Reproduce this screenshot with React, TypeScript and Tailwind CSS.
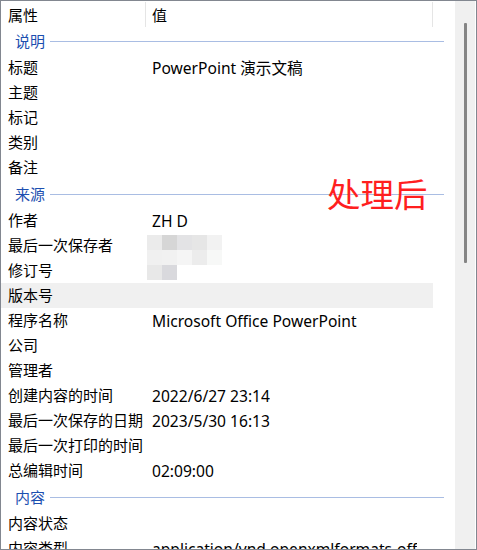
import React from "react";

type Row =
  | { kind: "section"; label: string }
  | { kind: "row"; label: string; value?: string; highlight?: boolean; blur?: boolean };

const rows: Row[] = [
  { kind: "section", label: "说明" },
  { kind: "row", label: "标题", value: "PowerPoint 演示文稿" },
  { kind: "row", label: "主题" },
  { kind: "row", label: "标记" },
  { kind: "row", label: "类别" },
  { kind: "row", label: "备注" },
  { kind: "section", label: "来源" },
  { kind: "row", label: "作者", value: "ZH D" },
  { kind: "row", label: "最后一次保存者", blur: true },
  { kind: "row", label: "修订号" },
  { kind: "row", label: "版本号", highlight: true },
  { kind: "row", label: "程序名称", value: "Microsoft Office PowerPoint" },
  { kind: "row", label: "公司" },
  { kind: "row", label: "管理者" },
  { kind: "row", label: "创建内容的时间", value: "2022/6/27 23:14" },
  { kind: "row", label: "最后一次保存的日期", value: "2023/5/30 16:13" },
  { kind: "row", label: "最后一次打印的时间" },
  { kind: "row", label: "总编辑时间", value: "02:09:00" },
  { kind: "section", label: "内容" },
  { kind: "row", label: "内容状态" },
  { kind: "row", label: "内容类型", value: "application/vnd.openxmlformats-off" },
];

// mosaic used to hide the saved-by name
const mosaic = [
  ["#ebebeb", "#d6d6d6", "#e3e3e5", "#e6e6e6", "#f2f2f2"],
  ["#f0f0f0", "#f1f1f1", "#f5f5f5", "#ececec", "#f7f8f7"],
  ["#e8e8e8", "#d9d9dd"],
];

function Mosaic() {
  return (
    <div className="flex flex-col pt-[8px]">
      {mosaic.map((line, i) => (
        <div key={i} className="flex">
          {line.map((c, j) => (
            <div key={j} className="h-[15px] w-[15px]" style={{ background: c }} />
          ))}
        </div>
      ))}
    </div>
  );
}

const font = "font-['Noto_Sans','Noto_Sans_CJK_SC',sans-serif]";

export default function App() {
  return (
    <div className={`relative flex h-[550px] w-[477px] overflow-hidden border border-[#828790] bg-white text-[15px] text-black ${font}`}>
      <div className="flex w-[454px] shrink-0 flex-col">
        <div className="flex h-[26px] shrink-0 items-center">
          <div className="flex h-full w-[144px] items-center pl-[7px] pt-[2px]">属性</div>
          <div className="h-[25px] w-px self-end bg-[#e5e5e5]" />
          <div className="flex h-full w-[286px] items-center pl-[6px] pt-[2px]">值</div>
          <div className="h-[25px] w-px self-end bg-[#e5e5e5]" />
        </div>
        {rows.map((r, i) =>
          r.kind === "section" ? (
            <div key={i} className="flex h-[28px] shrink-0 items-center pl-[14px] pr-[11px] text-[#1c4fb0]">
              <span className="leading-none">{r.label}</span>
              <div className="ml-[5px] h-px flex-1 bg-[#a9bde3]" />
            </div>
          ) : (
            <div
              key={i}
              className={`flex h-[25px] shrink-0 items-center ${r.highlight ? "mr-[22px] bg-[#f0f0f0]" : ""}`}
            >
              <div className="w-[151px] shrink-0 whitespace-nowrap pl-[7px] leading-none">{r.label}</div>
              <div className="relative flex h-[25px] w-[266px] items-center whitespace-nowrap text-[15.6px]">
                {r.blur ? (
                  <div className="absolute left-[-5px] top-[-6px]">
                    <Mosaic />
                  </div>
                ) : (
                  <div className="overflow-hidden leading-[22px]">{r.value}</div>
                )}
              </div>
            </div>
          ),
        )}
      </div>
      <div className="flex w-[20px] shrink-0 justify-center bg-[#f0f0f0] pt-[22px]">
        <div className="h-[240px] w-[3px] rounded-[1px] bg-[#858585]" />
      </div>
      <div className="absolute left-[326px] top-[177px] text-[33.5px] leading-none text-[#ff1f1f]">处理后</div>
    </div>
  );
}
